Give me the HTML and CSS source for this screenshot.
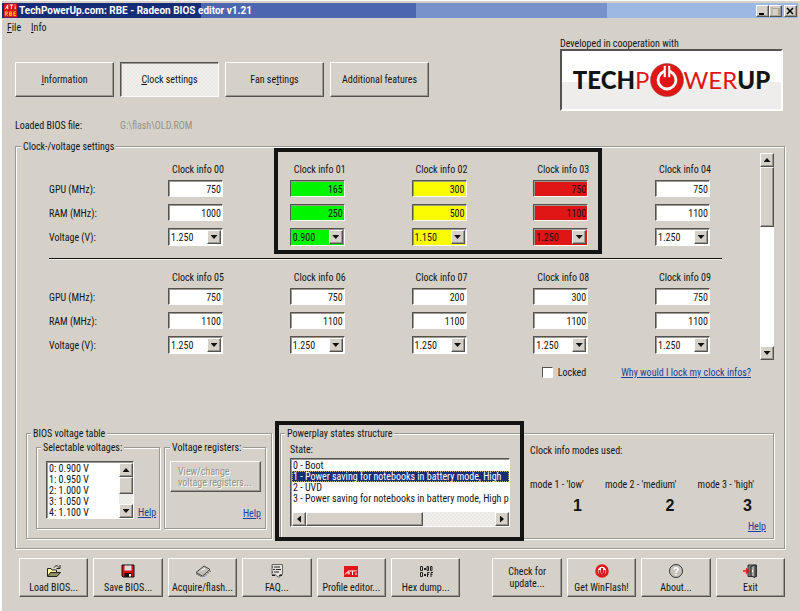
FILE: index.html
```html
<!DOCTYPE html>
<html lang="en">
<head>
<meta charset="utf-8">
<title>TechPowerUp.com: RBE - Radeon BIOS editor v1.21</title>
<link rel="stylesheet" href="styles.css">
</head>
<body>
<div class="window">
  <header class="titlebar">
    <svg class="app-icon" viewBox="0 0 14 15" aria-hidden="true"><rect width="14" height="15" fill="#dc1414"/><path d="M1.500 6 4 1.500V6M2.500 4.500H4M6 1.500H10M8 1.500V6M12 3V6M12 1V2" stroke="#fff" fill="none"/><path d="M1.500 13V9H3.500V11H1.500L4 13M6 9V13H8V9ZM6 11H8M13 9H10.500V13H13M10.500 11H12.500" stroke="#ffd400" fill="none"/></svg>
    <h1>TechPowerUp.com: RBE - Radeon BIOS editor v1.21</h1>
    <div class="caption-buttons">
      <button aria-label="Minimize"><svg viewBox="0 0 10 10"><path d="M2 8H7" stroke="#000" stroke-width="2"/></svg></button>
      <button aria-label="Maximize"><svg viewBox="0 0 10 10"><path d="M2 2.500H8.500V9.500H2V1M3 10.500H9.500V2" stroke="#aaa69f" fill="none"/></svg></button>
      <button class="close" aria-label="Close"><svg viewBox="0 0 10 10"><path d="M2 2 8 8M8 2 2 8" stroke="#000" stroke-width="1.500"/></svg></button>
    </div>
  </header>
  <nav class="menu"><a href="#"><u>F</u>ile</a><a href="#"><u>I</u>nfo</a></nav>

  <main>
    <div class="top">
      <div class="tabs">
        <button><span><u>I</u>nformation</span></button>
        <button class="active"><span><u>C</u>lock settings</span></button>
        <button><span>Fan se<u>t</u>tings</span></button>
        <button><span>Additional features</span></button>
      </div>
      <div class="partner">
        <p>Developed in cooperation with</p>
        <div class="logo"><b>TECH</b><span>P</span><svg viewBox="0 0 36 36" aria-hidden="true"><circle cx="18" cy="18" r="17.500" fill="#e01515" stroke="#7b4844" stroke-width=".5"/><circle cx="18" cy="18" r="9.500" fill="none" stroke="#fff" stroke-width="3"/><path d="M18 3V15" stroke="#fff" stroke-width="7"/><path d="M18 3V18" stroke="#e01515" stroke-width="2.500"/></svg><span>WER</span><b>UP</b></div>
      </div>
    </div>
    <p class="loaded"><span>Loaded BIOS file:</span><span class="path">G:\flash\OLD.ROM</span></p>

    <fieldset class="settings">
      <legend>Clock-/voltage settings</legend>
      <div class="clocks">
        <div class="clock-rows">
          <div class="clock-grid">
            <div class="clock names"><span></span><span>GPU (MHz):</span><span>RAM (MHz):</span><span>Voltage (V):</span></div>
            <div class="clock"><span class="head">Clock info 00</span><input aria-label="GPU 00" value="750"><input aria-label="RAM 00" value="1000"><div class="combo"><select aria-label="Voltage 00"><option>1.250</option></select><i class="arrow down"></i></div></div>
            <div class="clock low"><span class="head">Clock info 01</span><input aria-label="GPU 01" value="165"><input aria-label="RAM 01" value="250"><div class="combo"><select aria-label="Voltage 01"><option>0.900</option></select><i class="arrow down"></i></div></div>
            <div class="clock medium"><span class="head">Clock info 02</span><input aria-label="GPU 02" value="300"><input aria-label="RAM 02" value="500"><div class="combo"><select aria-label="Voltage 02"><option>1.150</option></select><i class="arrow down"></i></div></div>
            <div class="clock high"><span class="head">Clock info 03</span><input aria-label="GPU 03" value="750"><input aria-label="RAM 03" value="1100"><div class="combo"><select aria-label="Voltage 03"><option>1.250</option></select><i class="arrow down"></i></div></div>
            <div class="clock"><span class="head">Clock info 04</span><input aria-label="GPU 04" value="750"><input aria-label="RAM 04" value="1100"><div class="combo"><select aria-label="Voltage 04"><option>1.250</option></select><i class="arrow down"></i></div></div>
            <div class="marker marker-clocks"></div>
          </div>
          <hr>
          <div class="clock-grid">
            <div class="clock names"><span></span><span>GPU (MHz):</span><span>RAM (MHz):</span><span>Voltage (V):</span></div>
            <div class="clock"><span class="head">Clock info 05</span><input aria-label="GPU 05" value="750"><input aria-label="RAM 05" value="1100"><div class="combo"><select aria-label="Voltage 05"><option>1.250</option></select><i class="arrow down"></i></div></div>
            <div class="clock"><span class="head">Clock info 06</span><input aria-label="GPU 06" value="750"><input aria-label="RAM 06" value="1100"><div class="combo"><select aria-label="Voltage 06"><option>1.250</option></select><i class="arrow down"></i></div></div>
            <div class="clock"><span class="head">Clock info 07</span><input aria-label="GPU 07" value="200"><input aria-label="RAM 07" value="1100"><div class="combo"><select aria-label="Voltage 07"><option>1.250</option></select><i class="arrow down"></i></div></div>
            <div class="clock"><span class="head">Clock info 08</span><input aria-label="GPU 08" value="300"><input aria-label="RAM 08" value="1100"><div class="combo"><select aria-label="Voltage 08"><option>1.250</option></select><i class="arrow down"></i></div></div>
            <div class="clock"><span class="head">Clock info 09</span><input aria-label="GPU 09" value="750"><input aria-label="RAM 09" value="1100"><div class="combo"><select aria-label="Voltage 09"><option>1.250</option></select><i class="arrow down"></i></div></div>
          </div>
        </div>
        <div class="scroll plain"><i class="arrow up"></i><i class="thumb tall"></i><i class="arrow down last"></i></div>
      </div>
      <div class="lock-row">
        <label><input type="checkbox">Locked</label>
        <a href="#">Why would I lock my clock infos?</a>
      </div>

      <div class="panels">
        <fieldset class="voltage-table">
          <legend>BIOS voltage table</legend>
          <fieldset class="selectable">
            <legend>Selectable voltages:</legend>
            <div class="listbox voltages">
              <ul><li>0: 0.900 V</li><li>1: 0.950 V</li><li>2: 1.000 V</li><li>3: 1.050 V</li><li>4: 1.100 V</li></ul>
              <div class="scroll"><i class="arrow up"></i><i class="thumb"></i><i class="arrow down last"></i></div>
            </div>
            <a href="#">Help</a>
          </fieldset>
          <fieldset class="registers">
            <legend>Voltage registers:</legend>
            <button disabled>View/change<br>voltage registers...</button>
            <a href="#">Help</a>
          </fieldset>
        </fieldset>
        <fieldset class="powerplay">
          <legend>Powerplay states structure</legend>
          <div class="states">
            <p>State:</p>
            <div class="listbox">
              <ul><li>0 - Boot</li><li class="selected">1 - Power saving for notebooks in battery mode, High</li><li>2 - UVD</li><li>3 - Power saving for notebooks in battery mode, High p</li></ul>
              <div class="scroll flat"><i class="arrow left"></i><i class="thumb"></i><i class="arrow right last"></i></div>
            </div>
            <div class="marker marker-states"></div>
          </div>
          <div class="modes">
            <p>Clock info modes used:</p>
            <dl>
              <div><dt>mode 1 - 'low'</dt><dd>1</dd></div>
              <div><dt>mode 2 - 'medium'</dt><dd>2</dd></div>
              <div><dt>mode 3 - 'high'</dt><dd>3</dd></div>
            </dl>
            <a href="#">Help</a>
          </div>
        </fieldset>
      </div>
    </fieldset>

    <div class="actions">
      <button><svg viewBox="0 0 16 14"><path d="M1.500 12V4.500H5L6 6H10.500V8" fill="#fffb9e" stroke="#222"/><path d="M1.500 12.500 4.500 8.500H14.500L11 12.500Z" fill="#8f8c62" stroke="#222"/><path d="M8 3.500C9.500 1 12 1.500 13 3.500M14 1V4.500H10.500" fill="none" stroke="#222"/></svg>Load BIOS...</button>
      <button><svg viewBox="0 0 16 14"><path d="M2 1H14V13H3L2 12Z" fill="#d61212" stroke="#111"/><path d="M4.500 1.500H11.500V6.500H4.500Z" fill="#ddd"/><path d="M4.500 9H11.500V13H4.500Z" fill="#111"/><path d="M9 10H11V12.500H9Z" fill="#fff"/></svg>Save BIOS...</button>
      <button><svg viewBox="0 0 16 14"><path d="M1 8.500 9 2 15 5.500 7.500 12Z" fill="#c2bfb8" stroke="#444"/><path d="M2 9.500V11M4 10.500V12M6 11.500V13M9 11.500V13M11 10V11.500M13 8V9.500M15 6.500V8" stroke="#444"/><path d="M6 6.500 10 4.500" stroke="#fff"/></svg>Acquire/flash...</button>
      <button><svg viewBox="0 0 16 14"><path d="M3 .5H13.500V10.500H11V13H9L6 10.500H3Z" fill="#e5e2db" stroke="#666"/><path d="M5 3H11M7 5.500H12M5 8H10M3 11.500H6M10 11.500H13" stroke="#222"/><path d="M3 3H4M4 5.500H6M3 8H4" stroke="#222"/></svg>FAQ...</button>
      <button><svg viewBox="0 0 16 14"><path d="M1 2H15V13H1Z" fill="#e01515"/><path d="M2 10.500 6 6.500V10.500M4 9H6M7 7H12M9.500 7V11M13 8.500V11M13 6V7.500" stroke="#fff" fill="none"/></svg>Profile editor...</button>
      <button><svg viewBox="0 0 16 14"><path d="M2.500 2.500H4.500V6.500H2.500ZM9 2.500H10.500V6.500H9ZM12.500 2.500H14V6.500H12.500ZM2.500 8.500H4.500V12.500H2.500ZM6 4 8 6M8 4 6 6M6 10 8 12M8 10 6 12M9.500 13V8.500H11.500M9.500 10.500H11M13 13V8.500H15M13 10.500H14.500" stroke="#222" fill="none"/></svg>Hex dump...</button>
      <button class="update">Check for<br>update...</button>
      <button><svg viewBox="0 0 16 14"><circle cx="8" cy="7" r="5.500" fill="#fff" stroke="#e01515" stroke-width="2.500"/><path d="M5.500 6V8A2.500 2.500 0 0 0 10.500 8V6M8 4V9" stroke="#e01515" stroke-width="2" fill="none"/></svg>Get WinFlash!</button>
      <button><svg viewBox="0 0 16 14"><circle cx="8" cy="7" r="6.500" fill="#c5c2bb" stroke="#333"/><path d="M6 5.500C6 3 10.500 3 10 5.500C10 7 8 7 8 9M8 10V11.500" stroke="#fff" stroke-width="1.500" fill="none"/></svg>About...</button>
      <button><svg viewBox="0 0 16 14"><path d="M6 1H14.500V12.500H6Z" fill="#777" stroke="#333"/><path d="M9 2.500 13 1V13.500L9 12Z" fill="#aaa" stroke="#222"/><path d="M10.500 6V8" stroke="#fff"/><path d="M1 7H6M4 4.500 6.500 7 4 9.500" stroke="#e01515" stroke-width="1.500" fill="none"/></svg>Exit</button>
    </div>
  </main>
</div>
</body>
</html>
```
FILE: styles.css
```css
:root {
  --face: #d5d1c9;
  --light: #fdfdfb;
  --shade: #9b9892;
  --dark: #55534f;
  --dither: repeating-conic-gradient(#f1f0ed 0 25%, #e9e8e4 0 50%) 0 0 / 4px 4px;
}
* { box-sizing: border-box; }
body, p, h1, ul, dl, dd, fieldset, legend { margin: 0; padding: 0; }
body {
  background: var(--face);
  color: #141414;
  font: 10px/13px "Roboto Condensed", Roboto, "Liberation Sans", sans-serif;
}
button, input, select { font: inherit; color: inherit; margin: 0; border-radius: 0; }
ul { list-style: none; }
i { font-style: normal; }
a { color: #1a3f9e; white-space: nowrap; }
svg { display: block; }

.window { border-top: 1px solid var(--light); border-left: 2px solid var(--light); padding-top: 2px; min-height: 100vh; }

.titlebar {
  display: flex;
  align-items: center;
  height: 15px;
  margin-right: 2px;
  padding: 0 1px 0 2px;
  background: linear-gradient(90deg, #152d77 25%, #4c66b0 25% 52%, #7893cb 52% 76%, #9cb8e3 76%);
}
.app-icon { width: 13px; height: 15px; margin-right: 2px; }
.titlebar h1 { flex: 1; color: #fff; font: bold 10px/15px Roboto, sans-serif; }
.caption-buttons { display: flex; }
.caption-buttons svg { width: 10px; height: 10px; }
.caption-buttons .close { margin-left: 2px; }

button {
  background: var(--face);
  border: 1px solid;
  border-color: var(--light) var(--dark) var(--dark) var(--light);
  box-shadow: inset -1px -1px var(--shade);
  padding: 0;
}
.caption-buttons button { width: 13px; height: 12px; }

.menu { display: flex; gap: 10px; padding: 3px 5px 2px; }
.menu a { color: inherit; text-decoration: none; }

main { padding: 3px 15px 13px 13px; }
.top { display: flex; justify-content: space-between; padding-right: 2px; }
.tabs { display: flex; gap: 6px; padding-top: 23px; }
.tabs button { width: 99px; height: 35px; }
.tabs .active {
  background: var(--dither);
  border-color: var(--dark) var(--light) var(--light) var(--dark);
  box-shadow: inset 1px 1px var(--shade);
}
.partner { width: 223px; }
.partner p { line-height: 10px; }
.logo {
  display: flex;
  align-items: center;
  justify-content: center;
  height: 62px;
  border: 2px solid;
  border-color: var(--dark) var(--light) var(--light) var(--dark);
  background: linear-gradient(#fff 54%, #eeedeb 54%);
  font: 24px/58px Lato, sans-serif;
}
.logo b { font-weight: 900; }
.logo span { color: #e01515; }
.logo svg { width: 34px; height: 34px; }

.loaded { display: flex; margin-top: 8px; }
.loaded span { width: 105px; }
.loaded .path { color: #94918b; }

fieldset {
  min-width: 0;
  border: 1px solid var(--shade);
  box-shadow: 1px 1px var(--light), inset 1px 1px var(--light);
}
legend { padding: 0 2px; margin-left: -5px; background: var(--face); white-space: nowrap; }

.settings { margin-top: 8px; padding: 0 10px 9px; }
.clocks { display: flex; justify-content: space-between; gap: 38px; }
.clock-rows { flex: 1; padding: 10px 0 6px 23px; }
.clock-grid { display: grid; grid-template-columns: 119px repeat(4, 1fr) 67px; position: relative; }
.clock { display: grid; grid-template-rows: 17px 24px 24px 18px; align-items: start; justify-items: start; white-space: nowrap; }
.names span { line-height: 19px; }
.head { padding-left: 4px; }
.clock input, .combo, .listbox {
  border: 1px solid;
  border-color: var(--dark) var(--light) var(--light) var(--dark);
  box-shadow: inset 1px 1px var(--shade);
  background: #fff;
}
.clock input { width: 55px; height: 17px; padding: 1px 1px 0 2px; text-align: right; }
.combo { display: flex; width: 55px; height: 18px; padding: 1px; }
.combo select { flex: 1; min-width: 0; border: 0; padding: 0 0 0 1px; background: transparent; appearance: none; }
.low input, .low .combo { background: #00f500; }
.medium input, .medium .combo { background: #fafa00; }
.high input, .high .combo { background: #e01515; }
hr { height: 2px; margin: 12px 0 11px; border: 0; border-top: 1px solid #141414; border-bottom: 1px solid #eeede0; }

.arrow, .thumb {
  flex: none;
  display: grid;
  place-items: center;
  width: 14px;
  height: 14px;
  background: var(--face);
  border: 1px solid;
  border-color: var(--light) var(--dark) var(--dark) var(--light);
  box-shadow: inset -1px -1px var(--shade);
}
.arrow::before { content: ""; width: 7px; height: 4px; background: #111; clip-path: polygon(0 0, 100% 0, 50% 100%); }
.arrow.up::before { clip-path: polygon(50% 0, 100% 100%, 0 100%); }
.arrow.left::before { width: 4px; height: 7px; clip-path: polygon(100% 0, 100% 100%, 0 50%); }
.arrow.right::before { width: 4px; height: 7px; clip-path: polygon(0 0, 100% 50%, 0 100%); }
.last { margin-top: auto; }
.scroll { display: flex; flex-direction: column; width: 14px; background: var(--dither); }
.scroll.plain { background: #fff; }
.scroll .thumb { height: 17px; }
.scroll .tall { height: 60px; }
.scroll.flat { flex-direction: row; width: auto; }
.scroll.flat .thumb { width: 117px; height: 14px; }
.scroll.flat .last { margin: 0 0 0 auto; }

.marker { position: absolute; border: 4px solid #141414; pointer-events: none; }
.marker-clocks { grid-area: 1 / 3 / 2 / 6; inset: -15px 53px -8px -16px; }

.lock-row { display: flex; justify-content: flex-end; gap: 35px; margin-top: 6px; padding-right: 23px; }
.lock-row label { display: flex; align-items: center; gap: 5px; }
.lock-row input {
  appearance: none;
  width: 11px;
  height: 11px;
  background: #fff;
  border: 1px solid;
  border-color: var(--dark) var(--light) var(--light) var(--dark);
}

.panels { display: grid; grid-template-columns: 246px 1fr; gap: 8px; margin-top: 48px; }
.voltage-table { display: grid; grid-template-columns: 124px 102px; gap: 4px; padding: 1px 5px 9px 9px; }
.selectable { display: flex; align-items: flex-end; gap: 4px; padding: 7px 2px 9px 9px; }
.listbox { display: flex; overflow: hidden; padding: 1px 0 0 1px; }
.listbox ul { flex: 1; line-height: 11px; white-space: nowrap; }
.listbox li { padding-left: 1px; }
.voltages { flex: none; width: 88px; height: 58px; }
.registers { display: flex; flex-direction: column; justify-content: space-between; align-items: flex-end; padding: 7px 4px 8px 5px; }
.registers legend { margin-left: 0; }
.registers button { align-self: stretch; height: 31px; color: #94918b; text-shadow: 1px 1px var(--light); text-align: left; padding-left: 7px; line-height: 11px; white-space: nowrap; }

.powerplay { display: flex; gap: 20px; padding: 3px 7px 5px 9px; }
.states { position: relative; flex: 0 0 220px; min-width: 0; }
.states .listbox { flex-direction: column; height: 69px; margin-top: 2px; }
.states .selected { background: #152d77; color: #fff; outline: 1px dotted #c9b878; outline-offset: -1px; }
.marker-states { inset: -22px -14px -8px -15px; }
.modes { flex: 1; min-width: 0; display: flex; flex-direction: column; padding-top: 1px; }
.modes dl { display: flex; justify-content: space-between; margin-top: 21px; padding-right: 12px; white-space: nowrap; }
.modes dd { margin-top: 7px; padding-right: 2px; text-align: right; font: bold 16px/16px "Liberation Sans", sans-serif; }
.modes > a { align-self: flex-end; margin-top: auto; }

.actions { display: flex; gap: 5px; margin-top: 9px; padding-left: 4px; }
.actions button { flex: 1 1 0; min-width: 0; height: 39px; display: flex; flex-direction: column; align-items: center; justify-content: center; gap: 3px; padding-top: 2px; white-space: nowrap; }
.actions svg { width: 16px; height: 14px; }
.actions .update { display: block; margin-left: 27px; padding: 0; line-height: 12px; }
```
